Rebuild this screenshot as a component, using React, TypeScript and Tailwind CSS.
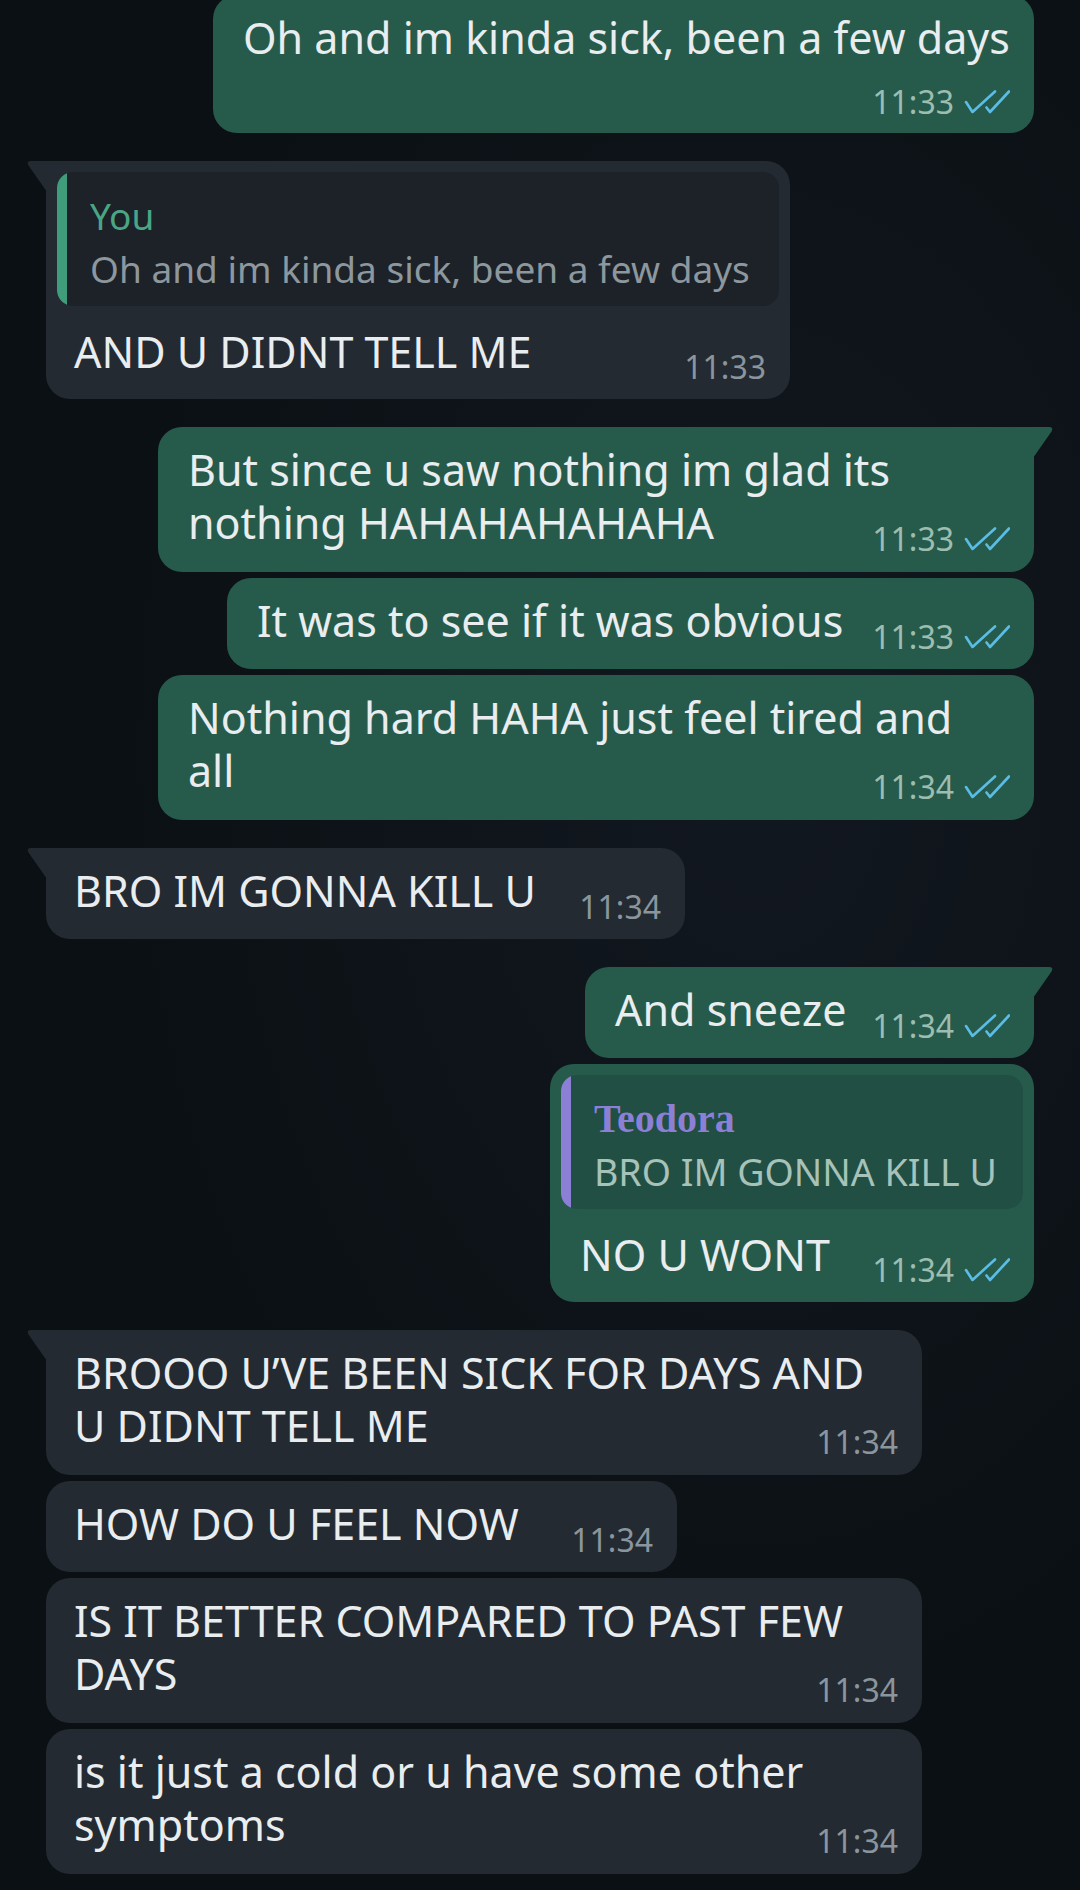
import clsx from "clsx";

type Quote = { name: string; text: string; me: boolean };

type Msg = {
  me: boolean;
  text: string;
  time: string;
  width: string;
  kind: "inline" | "multi" | "stacked" | "quote";
  tail?: boolean;
  first?: boolean;
  quote?: Quote;
};

const messages: Msg[] = [
  { me: true, text: "Oh and im kinda sick, been a few days", time: "11:33", width: "w-[821px]", kind: "stacked", first: true },
  {
    me: false,
    text: "AND U DIDNT TELL ME",
    time: "11:33",
    width: "w-[744px]",
    kind: "quote",
    tail: true,
    quote: { name: "You", text: "Oh and im kinda sick, been a few days", me: true },
  },
  { me: true, text: "But since u saw nothing im glad its\nnothing HAHAHAHAHAHA", time: "11:33", width: "w-[876px]", kind: "multi", tail: true },
  { me: true, text: "It was to see if it was obvious", time: "11:33", width: "w-[807px]", kind: "inline" },
  { me: true, text: "Nothing hard HAHA just feel tired and\nall", time: "11:34", width: "w-[876px]", kind: "multi" },
  { me: false, text: "BRO IM GONNA KILL U", time: "11:34", width: "w-[639px]", kind: "inline", tail: true },
  { me: true, text: "And sneeze", time: "11:34", width: "w-[449px]", kind: "inline", tail: true },
  {
    me: true,
    text: "NO U WONT",
    time: "11:34",
    width: "w-[484px]",
    kind: "quote",
    quote: { name: "Teodora", text: "BRO IM GONNA KILL U", me: false },
  },
  { me: false, text: "BROOO U\u2019VE BEEN SICK FOR DAYS AND\nU DIDNT TELL ME", time: "11:34", width: "w-[876px]", kind: "multi", tail: true },
  { me: false, text: "HOW DO U FEEL NOW", time: "11:34", width: "w-[631px]", kind: "inline" },
  { me: false, text: "IS IT BETTER COMPARED TO PAST FEW\nDAYS", time: "11:34", width: "w-[876px]", kind: "multi" },
  { me: false, text: "is it just a cold or u have some other\nsymptoms", time: "11:34", width: "w-[876px]", kind: "multi" },
];

const Ticks = () => (
  <svg width="46" height="24" viewBox="0 0 46 24" fill="none" stroke="#5bbde6" strokeWidth="2.6" strokeLinecap="round" strokeLinejoin="round">
    <path d="M2 12 L8.5 22 L31 1.5" />
    <path d="M22.5 17.5 L26 22 L45 1.5" />
  </svg>
);

const Time = ({ time, me, className }: { time: string; me: boolean; className?: string }) => (
  <span className={clsx("flex h-[36px] shrink-0 items-center gap-[10px] text-[32px] leading-[36px]", me ? "text-[#9dbdb1]" : "text-[#8a959d]", className)}>
    <span>{time}</span>
    {me && <Ticks />}
  </span>
);

// little corner flag on the first bubble of a run
const Tail = ({ me }: { me: boolean }) =>
  me ? (
    <svg className="absolute top-0 right-[-20px]" width="21" height="31" viewBox="0 0 21 31">
      <path d="M0 0 H16 Q21 0 18.5 4.5 L0 31 Z" fill="#265b4b" />
    </svg>
  ) : (
    <svg className="absolute top-0 left-[-20px]" width="21" height="31" viewBox="0 0 21 31">
      <path d="M21 0 H5 Q0 0 2.5 4.5 L21 31 Z" fill="#232a31" />
    </svg>
  );

const QuoteBox = ({ quote }: { quote: Quote }) => (
  <div className="px-[11px] pt-[11px]">
    <div className={clsx("flex overflow-hidden rounded-[16px]", quote.me ? "bg-[#1c2228]" : "bg-[#214f44]")}>
      <div className={clsx("w-[10px] shrink-0", quote.me ? "bg-[#3f9d7c]" : "bg-[#8b80d6]")} />
      <div className="pl-[23px] pr-[20px] pt-[20px] pb-[13px]">
        {quote.me ? (
          <div className="mb-[5px] text-[37px] leading-[48px] text-[#4aa585]">{quote.name}</div>
        ) : (
          <div className="mb-[5px] font-['Liberation_Serif',serif] text-[40px] font-bold leading-[48px] text-[#8b80d6]">{quote.name}</div>
        )}
        <div className={clsx("whitespace-nowrap leading-[48px]", quote.me ? "text-[37px] text-[#8d979e]" : "text-[37.5px] text-[#a6c2b9]")}>
          {quote.text}
        </div>
      </div>
    </div>
  </div>
);

const Bubble = ({ m }: { m: Msg }) => {
  const body = "whitespace-pre text-[43px] leading-[53px] text-[#e9edef]";
  const pad = m.me ? "pl-[30px]" : "pl-[28px]";
  return (
    <div
      className={clsx(
        "relative rounded-[24px]",
        m.width,
        m.me ? "self-end bg-[#265b4b]" : "self-start bg-[#232a31]",
        m.tail && (m.me ? "rounded-tr-none" : "rounded-tl-none"),
        m.first ? "" : m.tail ? "mt-[28px]" : "mt-[6px]"
      )}
    >
      {m.tail && <Tail me={m.me} />}
      {m.kind === "inline" && (
        <div className={clsx("flex items-start justify-between pr-[24px] pt-[16px] pb-[14px]", pad)}>
          <div className={body}>{m.text}</div>
          <Time time={m.time} me={m.me} className="mt-[25px]" />
        </div>
      )}
      {m.kind === "multi" && (
        <div className={clsx("pr-[24px] pt-[16px] pb-[15px]", pad)}>
          {/* the float lands on the last line, at the right, like WhatsApp's time stamp */}
          <div className={clsx(body, "flow-root")}>
            {m.text}
            <Time time={m.time} me={m.me} className="float-right mt-[25px]" />
          </div>
        </div>
      )}
      {m.kind === "stacked" && (
        <div className={clsx("pr-[24px] pt-[16px] pb-[13px]", pad)}>
          <div className={body}>{m.text}</div>
          <div className="mt-[20px] flex justify-end">
            <Time time={m.time} me={m.me} />
          </div>
        </div>
      )}
      {m.kind === "quote" && m.quote && (
        <>
          <QuoteBox quote={m.quote} />
          <div className={clsx("flex items-start justify-between pr-[24px] pt-[19px] pb-[14px]", pad)}>
            <div className={body}>{m.text}</div>
            <Time time={m.time} me={m.me} className="mt-[24px]" />
          </div>
        </>
      )}
    </div>
  );
};

const App = () => {
  return (
    <div className="h-[1890px] w-[1080px] overflow-hidden bg-[#0b1014] bg-[radial-gradient(ellipse_at_70%_40%,#121820_0%,#0b1014_60%)] font-['Noto_Sans',sans-serif]">
      <div className="-mt-[5px] flex flex-col px-[46px]">
        {messages.map((m, i) => (
          <Bubble key={i} m={m} />
        ))}
      </div>
    </div>
  );
};

export default App;
